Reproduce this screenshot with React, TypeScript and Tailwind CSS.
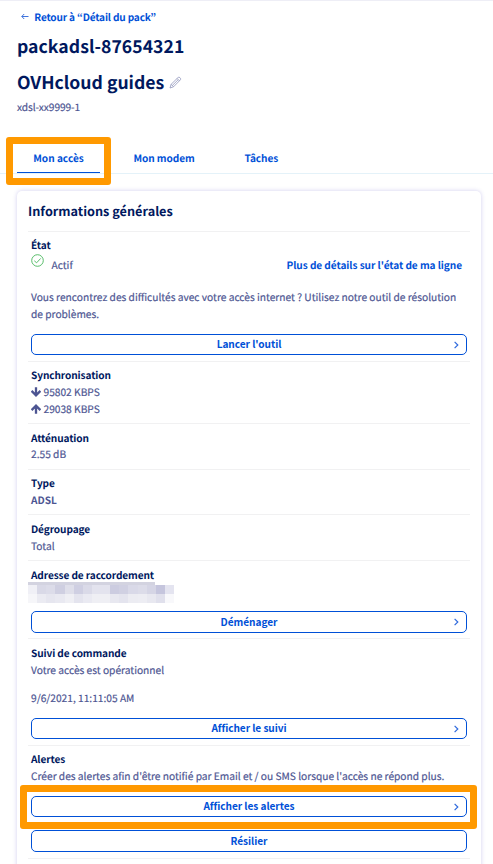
import type { ReactNode } from 'react';

function Line({ children, className = '' }: { children: ReactNode; className?: string }) {
  const weight = className.includes('font-bold') ? 'text-[10.1px]' : 'text-[10.2px] [-webkit-text-stroke:0.18px_currentColor]';
  return <div className={`h-[17px] whitespace-nowrap leading-[17px] ${weight} ${className}`}>{children}</div>;
}

function Label({ children, className = '' }: { children: ReactNode; className?: string }) {
  return <Line className={`font-bold tracking-[-0.1px] text-[#00185e] ${className}`}>{children}</Line>;
}

function Section({ children, className }: { children: ReactNode; className: string }) {
  return <section className={`border-b border-[#f1f1f2] pl-[3px] pr-[3px] ${className}`}>{children}</section>;
}

function ActionButton({ children, className, chevron = true }: { children: ReactNode; className: string; chevron?: boolean }) {
  return (
    <button
      className={`flex w-full items-center rounded-[5px] border border-[#0050d7] bg-white pl-4 pr-1 text-[10.1px] font-bold tracking-[-0.05px] text-[#0050d7] ${className}`}
    >
      <span className="flex-1 whitespace-nowrap pb-[2px] text-center leading-[17px]">{children}</span>
      <span className="flex w-3 justify-center">
        {chevron && (
          <svg width="5" height="8" viewBox="0 0 5 8" fill="none" stroke="#2f6add" strokeWidth="1.2">
            <path d="M0.6 0.8 3.8 4 0.6 7.2" />
          </svg>
        )}
      </span>
    </button>
  );
}

function Arrow({ up = false }: { up?: boolean }) {
  return (
    <svg className={`mr-[2.5px] ${up ? 'rotate-180' : ''}`} width="10" height="10" viewBox="0 0 10 10" fill="none" stroke="#4d5592" strokeWidth="2.3">
      <path d="M5 0.3V8.4M0.6 3.9 5 8.3 9.4 3.9" />
    </svg>
  );
}

const maskTop = ['#f0f0f6', '#d9d9e7', '#dcdce9', '#cfcfe1', '#dfdfea', '#cfcfe2', '#dadae8', '#e3e3ee', '#e3e3ee', '#cccce0', '#d0d0e2', '#d9d9e8', '#dcdce9', '#d5d5e5', '#c5c5dd', '#e4e4f0'];
const maskBottom = ['#f6f6f9', '#ebebf2', '#e6e6ef', '#e9e9f1', '#efeff4', '#e4e4ee', '#eaeaf2', '#efeff4', '#efeff4', '#e8e8f0', '#e4e4ee', '#ececf2', '#ededf3', '#e8e8f0', '#e0e0ec', '#f8f8fb'];

// Redacted address: a short strip over two rows of tinted cells.
function MaskedAddress() {
  return (
    <div className="-ml-[3px] h-[21px] w-[146px]">
      <div className="h-[3px] w-[127px] bg-[#d3d3e0]" />
      <div className="flex h-[18px]">
        {maskTop.map((color, i) => (
          <div key={i} className="flex flex-1 flex-col">
            <div className="h-[9px]" style={{ backgroundColor: color }} />
            <div className="h-[9px]" style={{ backgroundColor: maskBottom[i] }} />
          </div>
        ))}
      </div>
    </div>
  );
}

export default function App() {
  return (
    <div className="h-[864px] w-[493px] overflow-hidden border-t border-[#eeeef6] bg-white font-['Noto_Sans_CJK_KR','Noto_Sans_CJK_JP',sans-serif] text-[#4d5592] [text-rendering:geometricPrecision]">
      <header className="pl-[17px] pt-[7px]">
        <a className="flex items-center text-[#0050d7]">
          <svg className="ml-1 mr-[5.3px]" width="8" height="7" viewBox="0 0 8 7" fill="none" stroke="#3f73dc" strokeWidth="1">
            <path d="M0.8 3.5H7.5M3.2 1 0.8 3.5 3.2 6" />
          </svg>
          <Line className="font-bold tracking-[-0.17px]">Retour à “Détail du pack”</Line>
        </a>
        <h1 className="mt-[10px] h-6 whitespace-nowrap text-[17.6px] font-bold leading-6 tracking-[0.04px] text-[#00185e]">packadsl-87654321</h1>
        <div className="mt-3 flex h-6 items-center">
          <h2 className="whitespace-nowrap text-[17.6px] font-bold leading-6 text-[#00185e]">OVHcloud guides</h2>
          <svg className="mb-[2px] ml-[4.5px]" width="13" height="13" viewBox="0 0 13 13" fill="none" stroke="#9297bd" strokeWidth="0.8" strokeLinejoin="round">
            <path d="M1 12 2.1 8.3 9.2 1.4C10.2.5 12.4 2.6 11.5 3.7L4.5 10.8ZM2.1 8.3 4.5 10.8M8.1 2.5 10.4 4.8M3.3 9.5 9.2 3.7" />
          </svg>
        </div>
        <Line className="mt-[3px] tracking-[-0.08px]">xdsl-xx9999-1</Line>
      </header>

      <nav className="relative mt-[30px] flex h-[29px] border-b border-[#e4f2f9] pl-[17px] text-[#0050d7]">
        <div className="h-[28px] w-[83px] border-b border-[#0050d7] pt-[4px] text-center"><Line className="font-bold">Mon accès</Line></div>
        <div className="ml-[17px] w-[127.5px] pl-[16.5px] pt-[4px]"><Line className="font-bold tracking-[-0.08px]">Mon modem</Line></div>
        <div className="pt-[4px]"><Line className="font-bold tracking-[-0.08px]">Tâches</Line></div>
        <div className="absolute -top-[8px] left-[6px] h-[48px] w-[105px] rounded-[3px] border-[7px] border-[#ff9900]" />
      </nav>

      <main className="ml-[17px] mt-[17px] h-[700px] w-[464px] rounded-t-[5px] bg-white px-[11px] pt-[11px] shadow-[0_0_4px_rgba(70,60,190,0.25)]">
        <h3 className="h-[30px] whitespace-nowrap border-b border-[#f1f1f2] text-[12.7px] font-bold leading-[17px] text-[#00185e]">Informations générales</h3>

        <Section className="h-[130px] pt-[4px]">
          <Label>État</Label>
          <div className="mt-[3px] flex h-[17px] items-center">
            <svg className="mb-[8px]" width="13" height="13" viewBox="0 0 13 13" fill="none" stroke="#46b65a" strokeWidth="0.9">
              <circle cx="6.5" cy="6.5" r="5.8" />
              <path d="M3.3 6.8 5.6 8.8 9.7 4.4" />
            </svg>
            <Line className="ml-[7.5px] flex-1">Actif</Line>
            <Line className="mr-[5px] font-bold tracking-[-0.06px] text-[#0050d7]">Plus de détails sur l'état de ma ligne</Line>
          </div>
          <Line className="mt-[15px]">Vous rencontrez des difficultés avec votre accès internet ? Utilisez notre outil de résolution</Line>
          <Line>de problèmes.</Line>
          <ActionButton className="mt-[12px] h-[21px]">Lancer l'outil</ActionButton>
        </Section>

        <Section className="h-[62px] pt-[4px]">
          <Label>Synchronisation</Label>
          <Line className="flex items-center"><Arrow />95802 KBPS</Line>
          <Line className="flex items-center"><Arrow up />29038 KBPS</Line>
        </Section>

        <Section className="h-[46px] pt-[5px]">
          <Label>Atténuation</Label>
          <Line className="-mt-px">2.55 dB</Line>
        </Section>

        <Section className="h-[45px] pt-[4px]">
          <Label>Type</Label>
          <Line className="font-bold">ADSL</Line>
        </Section>

        <Section className="h-[46px] pt-[5px]">
          <Label>Dégroupage</Label>
          <Line>Total</Line>
        </Section>

        <Section className="h-[78px] pt-[5px]">
          <Label className="-mb-px">Adresse de raccordement</Label>
          <MaskedAddress />
          <ActionButton className="mt-[8px] h-[22px]">Déménager</ActionButton>
        </Section>

        <Section className="h-[107px] pt-[5px]">
          <Label>Suivi de commande</Label>
          <Line>Votre accès est opérationnel</Line>
          <Line className="mt-[11px]">9/6/2021, 11:11:05 AM</Line>
          <ActionButton className="mt-[12px] h-[21px]">Afficher le suivi</ActionButton>
        </Section>

        <Section className="relative h-[113px] pt-[4px]">
          <Label>Alertes</Label>
          <Line>Créer des alertes afin d'être notifié par Email et / ou SMS lorsque l'accès ne répond plus.</Line>
          <ActionButton className="mt-[12px] h-[21px]">Afficher les alertes</ActionButton>
          <ActionButton className="mt-[13px] h-[22px]" chevron={false}>Résilier</ActionButton>
          <div className="absolute -left-[8px] top-[39px] h-[44px] w-[457px] rounded-[3px] border-[7px] border-[#ff9900]" />
        </Section>
      </main>
    </div>
  );
}
